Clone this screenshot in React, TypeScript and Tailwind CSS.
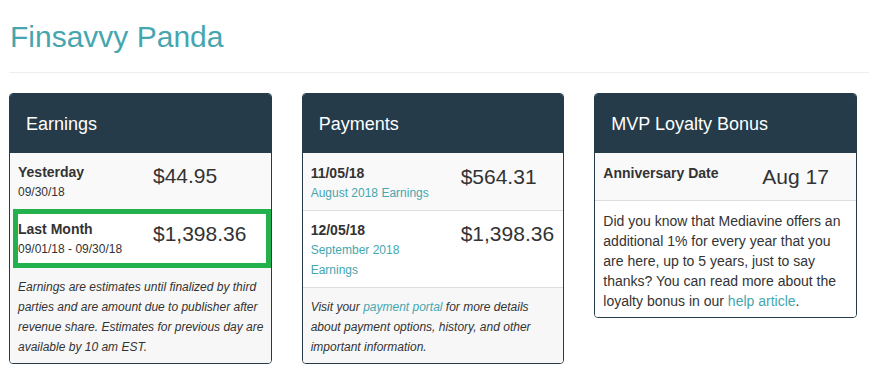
import React from "react";

const font = { fontFamily: '"Liberation Sans", Arial, sans-serif' };

function Header({ title }: { title: string }) {
  return (
    <div className="h-[59px] bg-[#253b4a] flex items-center pl-[16px] text-[18px] text-white leading-[24px]">
      {title}
    </div>
  );
}

export default function App() {
  return (
    <div className="bg-white w-[876px] min-h-[391px] text-[#333]" style={font}>
      <div className="pl-[9px] w-[869px]">
        <h1 className="pt-[20px] pl-[1px] text-[30px] leading-[33px] text-[#45a6b0] font-normal">
          Finsavvy Panda
        </h1>
        <div className="mt-[19px] h-px bg-[#eeeeee]" />
        <div className="mt-[20px] w-[848px] grid grid-cols-3 gap-[30px] items-start">
          {/* Earnings */}
          <div className="border border-[#253b4a] rounded-[4px] overflow-hidden">
            <Header title="Earnings" />
            <div className="h-[55px] bg-[#f9f9f9] flex">
              <div className="w-[143px] pl-[8px] pt-[9px]">
                <div className="text-[14px] leading-[20px] font-bold">Yesterday</div>
                <div className="text-[12px] leading-[20px]">09/30/18</div>
              </div>
              <div className="pt-[11px] text-[21px] leading-[24px]">$44.95</div>
            </div>
            <div className="bg-[#f9f9f9] pt-px pl-[3px]">
              <div className="h-[59px] border-[5px] border-[#22b14c] bg-white flex">
                <div className="w-[135px] pt-[5px]">
                  <div className="text-[14px] leading-[20px] font-bold">Last Month</div>
                  <div className="text-[12px] leading-[20px] whitespace-nowrap">09/01/18 - 09/30/18</div>
                </div>
                <div className="pt-[8px] text-[21px] leading-[24px]">$1,398.36</div>
              </div>
            </div>
            <div className="bg-[#f7f7f7] pl-[8px] pr-[3px] pt-[9px] pb-[6px] text-[12px] leading-[20px] italic">
              Earnings are estimates until finalized by third parties and are amount due to publisher after revenue share. Estimates for previous day are available by 10 am EST.
            </div>
          </div>

          {/* Payments */}
          <div className="border border-[#253b4a] rounded-[4px] overflow-hidden">
            <Header title="Payments" />
            <div className="h-[58px] bg-[#f9f9f9] flex border-b border-[#dddddd]">
              <div className="w-[158px] pl-[8px] pr-[25px] pt-[10px]">
                <div className="text-[14px] leading-[20px] font-bold">11/05/18</div>
                <div className="text-[12px] leading-[20px] text-[#45a6b0]">August 2018 Earnings</div>
              </div>
              <div className="pt-[12px] text-[21px] leading-[24px]">$564.31</div>
            </div>
            <div className="h-[77px] bg-white flex border-b border-[#dddddd]">
              <div className="w-[158px] pl-[8px] pr-[25px] pt-[9px]">
                <div className="text-[14px] leading-[20px] font-bold">12/05/18</div>
                <div className="text-[12px] leading-[20px] text-[#45a6b0]">September 2018 Earnings</div>
              </div>
              <div className="pt-[11px] text-[21px] leading-[24px]">$1,398.36</div>
            </div>
            <div className="bg-[#f7f7f7] px-[8px] pt-[9px] pb-[6px] text-[12px] leading-[20px] italic">
              Visit your <span className="text-[#45a6b0]">payment portal</span> for more details about payment options, history, and other important information.
            </div>
          </div>

          {/* MVP Loyalty Bonus */}
          <div className="border border-[#253b4a] rounded-[4px] overflow-hidden">
            <Header title="MVP Loyalty Bonus" />
            <div className="h-[48px] bg-[#f9f9f9] flex border-b border-[#dddddd]">
              <div className="w-[167px] pl-[8px] pt-[10px]">
                <div className="text-[14px] leading-[20px] font-bold">Anniversary Date</div>
              </div>
              <div className="pt-[12px] text-[21px] leading-[24px]">Aug 17</div>
            </div>
            <div className="bg-white pl-[8px] pr-[3px] pt-[10px] pb-[6px] text-[14px] leading-[20px] whitespace-nowrap">
              Did you know that Mediavine offers an
              <br />
              additional 1% for every year that you
              <br />
              are here, up to 5 years, just to say
              <br />
              thanks? You can read more about the
              <br />
              loyalty bonus in our <span className="text-[#45a6b0]">help article</span>.
            </div>
          </div>
        </div>
      </div>
    </div>
  );
}
